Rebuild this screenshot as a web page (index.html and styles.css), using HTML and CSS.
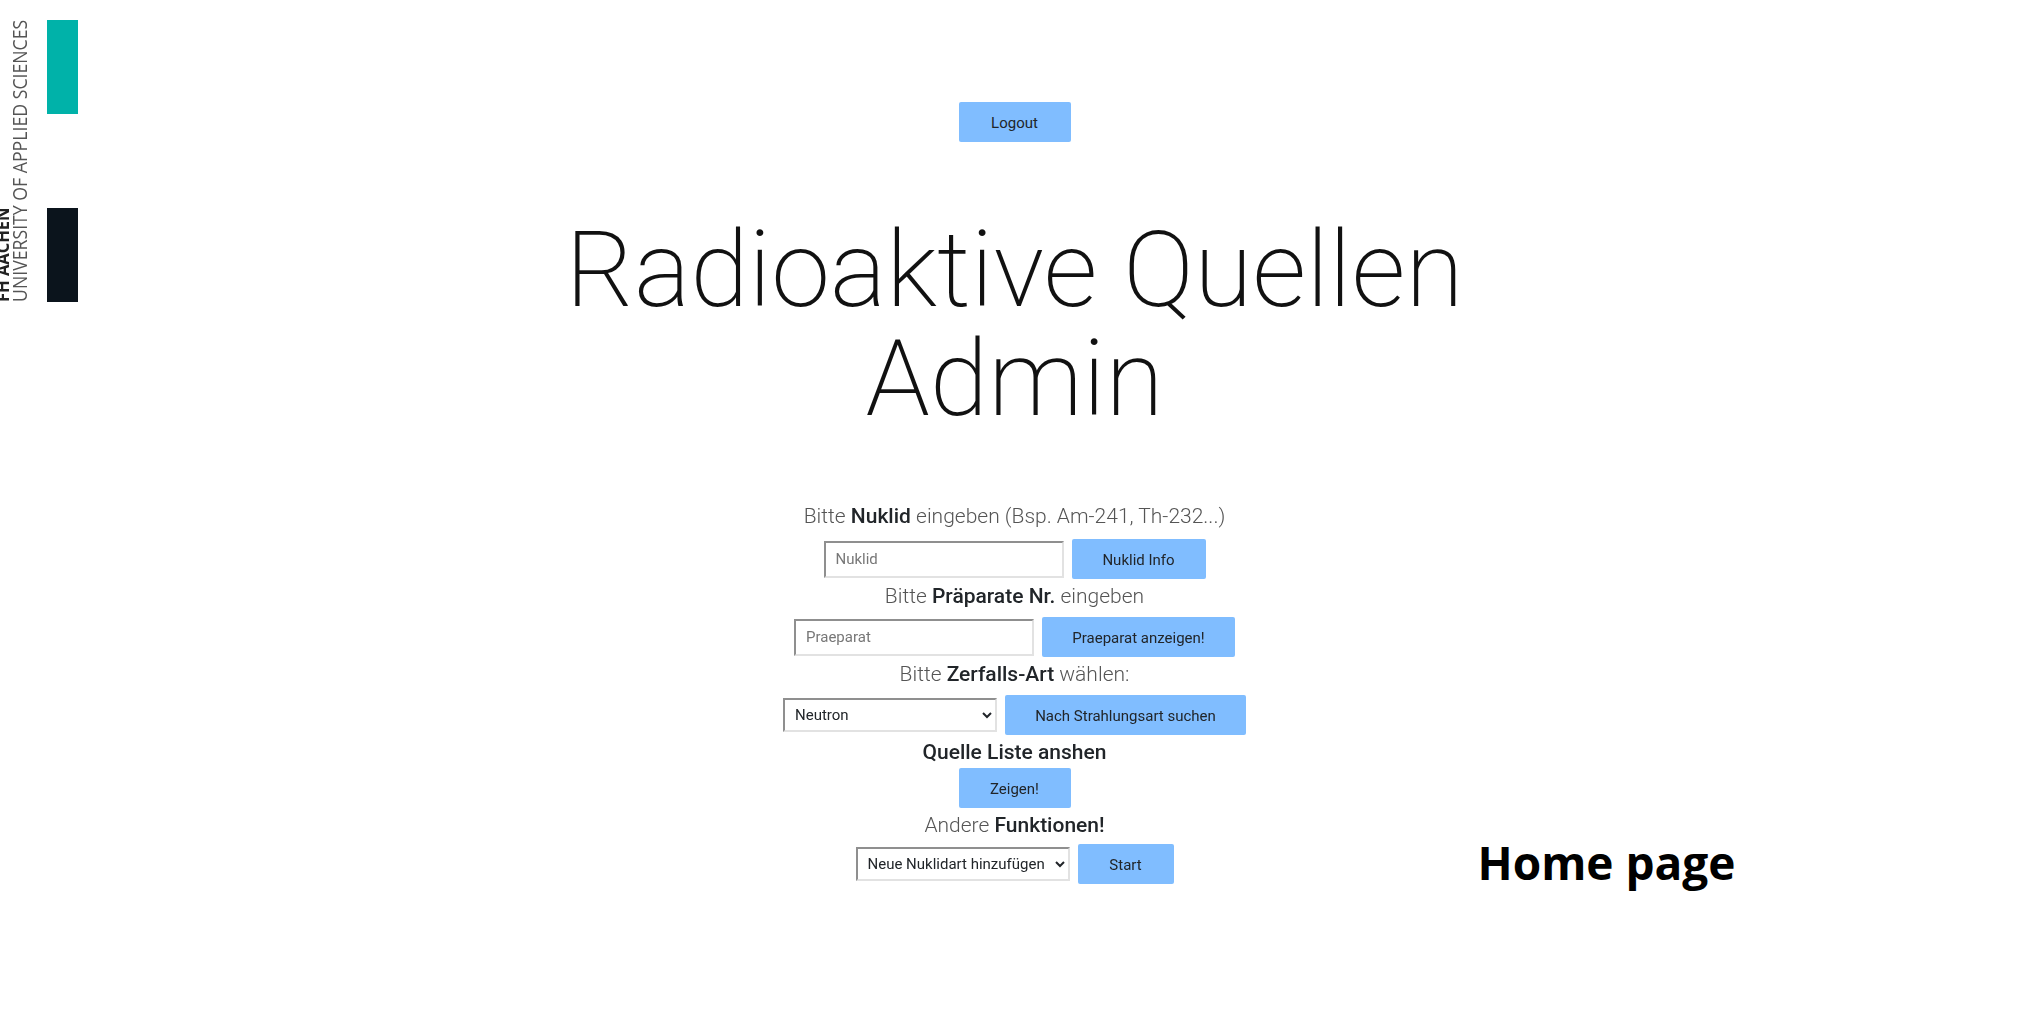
FILE: index.html
```html
<!DOCTYPE html>
<html lang="de">
    <head>
        <meta charset="UTF-8" />
        <meta name="viewport" content="width=device-width, initial-scale=1.0" />
        <title>Radioaktive Quellen Admin</title>
        <link rel="stylesheet" href="styles.css">
    </head>
    <body>
        <div class="slide">
            <aside class="logo">
                <span class="logo-name">FH AACHEN</span>
                <span class="logo-sub">UNIVERSITY OF APPLIED SCIENCES</span>
                <div class="logo-bars">
                    <div class="bar bar-teal"></div>
                    <div class="bar bar-dark"></div>
                </div>
            </aside>

            <main class="content">
                <button class="btn btn-wide" type="button">Logout</button>
                <h1>Radioaktive Quellen<br />Admin</h1>

                <p class="label label-first">Bitte <b>Nuklid</b> eingeben (Bsp. Am-241, Th-232...)</p>
                <form class="row">
                    <input type="text" placeholder="Nuklid" />
                    <button class="btn btn-nuklid" type="button">Nuklid Info</button>
                </form>

                <p class="label">Bitte <b>Präparate Nr.</b> eingeben</p>
                <form class="row">
                    <input type="text" placeholder="Praeparat" />
                    <button class="btn btn-praeparat" type="button">Praeparat anzeigen!</button>
                </form>

                <p class="label">Bitte <b>Zerfalls-Art</b> wählen:</p>
                <form class="row">
                    <select>
                        <option>Neutron</option>
                    </select>
                    <button class="btn btn-zerfall" type="button">Nach Strahlungsart suchen</button>
                </form>

                <p class="label"><b>Quelle Liste anshen</b></p>
                <div class="row row-list">
                    <button class="btn btn-wide" type="button">Zeigen!</button>
                </div>

                <p class="label">Andere <b>Funktionen!</b></p>
                <form class="row row-last">
                    <select>
                        <option>Neue Nuklidart hinzufügen</option>
                    </select>
                    <button class="btn btn-start" type="button">Start</button>
                </form>
            </main>

            <div class="caption">Home page</div>
        </div>
    </body>
</html>
```

FILE: styles.css
```css
* {
    box-sizing: border-box;
}

body {
    margin: 0;
    background-color: #fff;
    font-family: Roboto, Arial, sans-serif;
    color: #212529;
}

.slide {
    display: grid;
    grid-template-columns: 1fr 1000px 1fr;
    height: 1011px;
    overflow: hidden;
}

/* logo */
.logo {
    display: flex;
    height: 320px;
    padding-top: 20px;
    filter: blur(0.6px);
}

.logo-name,
.logo-sub {
    height: 282px;
    writing-mode: vertical-rl;
    font-family: "Open Sans", Arial, sans-serif;
    white-space: nowrap;
}

.logo-name {
    flex: 0 0 14px;
    margin-left: -5px;
    transform: rotate(180deg) scaleX(1.1);
    font-size: 16.5px;
    font-weight: 700;
    line-height: 14px;
    color: #222;
}

.logo-sub {
    flex: 0 0 20px;
    transform: rotate(180deg) scaleX(1.15);
    font-size: 17.7px;
    line-height: 20px;
    color: #555;
}

.logo-bars {
    display: flex;
    flex-direction: column;
    justify-content: space-between;
    width: 31px;
    height: 282px;
    margin-left: 18px;
}

.bar {
    height: 94px;
}

.bar-teal {
    background-color: #00b2a9;
}

.bar-dark {
    background-color: #0b141c;
}

/* main */
.content {
    display: flex;
    flex-direction: column;
    align-items: center;
    padding-top: 102px;
}

h1 {
    margin: 74px 0 0;
    font-size: 106px;
    font-weight: 200;
    line-height: 109px;
    text-align: center;
    color: #111;
}

.label {
    margin: 0;
    font-size: 21px;
    font-weight: 300;
    line-height: 26px;
    text-align: center;
    color: #555;
    filter: blur(0.6px);
}

.label b {
    font-weight: 500;
    color: #212529;
}

.label-first {
    margin-top: 69px;
    margin-bottom: 2px;
}

.row {
    display: flex;
    align-items: center;
    gap: 8px;
    height: 40px;
    margin: 8px 0 4px;
    filter: blur(0.6px);
}

.row-list {
    margin-top: 3px;
}

.row-last {
    margin-top: 6px;
}

input {
    width: 240px;
    height: 37px;
    padding: 0 10px;
    border: 2px solid;
    border-color: #8f8f8f #e2e2e2 #e2e2e2 #8f8f8f;
    font-family: inherit;
    font-size: 15px;
}

input::placeholder {
    color: #777;
}

select {
    width: 214px;
    height: 34px;
    padding: 0 6px;
    border: 2px solid;
    border-color: #8f8f8f #e2e2e2 #e2e2e2 #8f8f8f;
    background-color: #fff;
    font-family: inherit;
    font-size: 15px;
    color: #212529;
}

.btn {
    height: 40px;
    padding: 1px 0 0;
    border: 0;
    border-radius: 2px;
    background-color: #80bdff;
    font-family: inherit;
    font-size: 15px;
    color: #212529;
}

.btn-wide {
    width: 112px;
}

.btn-nuklid {
    width: 134px;
}

.btn-praeparat {
    width: 193px;
}

.btn-zerfall {
    width: 241px;
}

.btn-start {
    width: 96px;
}

/* caption */
.caption {
    justify-self: start;
    margin: 834px 0 0 -37px;
    font-family: "Open Sans", Arial, sans-serif;
    font-size: 46px;
    font-weight: 700;
    line-height: 56px;
    color: #000;
    white-space: nowrap;
}
```
